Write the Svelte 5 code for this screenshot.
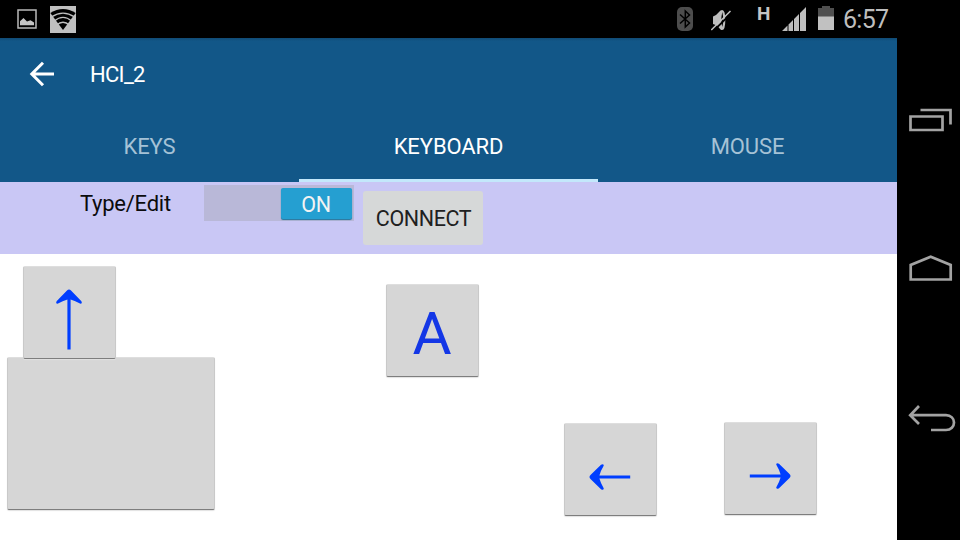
<script>
  const tabs = ['KEYS', 'KEYBOARD', 'MOUSE'];
  const selected = 'KEYBOARD';
  const keys = [
    { name: 'blank', x: 7, y: 103, w: 208, h: 153 },
    { name: 'up', x: 23, y: 12, w: 93, h: 93 },
    { name: 'A', x: 386, y: 30, w: 93, h: 93 },
    { name: 'left', x: 564, y: 169, w: 93, h: 93 },
    { name: 'right', x: 724, y: 168, w: 93, h: 93 }
  ];
</script>

<div class="screen">
  <header class="status">
    <svg class="picture" width="20" height="20" viewBox="0 0 20 20">
      <rect x="1" y="1" width="18" height="18" fill="none" stroke="#b9b9b9" stroke-width="1.5" />
      <path d="M3 16.3V12.2L6.5 9L10 12.4L13.5 11.2L17 13.5V16.3Z" fill="#c4c4c4" />
    </svg>
    <svg class="wifi" width="26" height="27" viewBox="0 0 26 27">
      <rect width="26" height="27" fill="#c0c0c0" />
      <path d="M.3 7Q13 -1 25.7 7L13 24Z" />
      <g fill="none" stroke="#c0c0c0" stroke-width="1.4">
        <path d="M1.5 10.8Q13 3.4 24.5 10.8" />
        <path d="M4.3 15Q13 7.8 21.7 15" />
        <path d="M6.5 19.3Q13 13.2 19.5 19.3" />
      </g>
    </svg>
    <span class="space"></span>
    <svg class="bluetooth" width="16" height="24" viewBox="0 0 16 24">
      <rect width="16" height="24" rx="5" fill="#4d4d4d" />
      <path d="M3 7.5L12.5 16L8.3 20V4L12.5 8L3 16.5" fill="none" stroke="#000" stroke-width="1.5" />
    </svg>
    <svg class="mute" width="20" height="24" viewBox="0 0 20 24">
      <path d="M2 8.5L5 7L9.5 2.5Q14.3 -.5 14.3 12T9.5 21.5L6 17.5L2 16Z" fill="#bdbdbd" />
      <path d="M11.3 4Q13.2 12 11.3 19Q9.3 12 11.3 4Z" fill="#000" />
      <path d="M2 23.5L21 4.5" stroke="#000" stroke-width="1.8" />
      <path d="M.3 22L19.5 3" stroke="#c4c4c4" stroke-width="1.5" />
    </svg>
    <span class="network">H</span>
    <svg class="signal" width="24" height="24" viewBox="0 0 24 24" fill="#bebebe">
      <path d="M0 24L5.5 18.5V24ZM6.5 17.5L11 13V24H6.5ZM12 12L17 7V24H12ZM18 6L24 0V24H18Z" />
    </svg>
    <svg class="battery" width="16" height="24" viewBox="0 0 16 24">
      <path d="M4 0H12V2H16V11H0V2H4Z" fill="#505050" />
      <path d="M0 10.5H16V24H0Z" fill="#c1c1c1" />
    </svg>
    <time>6:57</time>
  </header>
  <div class="body">
    <main>
      <div class="appbar">
        <svg width="26" height="26" viewBox="0 0 26 26" fill="none" stroke="#fff" stroke-width="3">
          <path d="M25 13H3M14 1.8L2.8 13L14 24.2" />
        </svg>
        <h1>HCI_2</h1>
      </div>
      <nav>
        {#each tabs as tab}
          <button class="tab" class:active={tab === selected}><span>{tab}</span></button>
        {/each}
      </nav>
      <section class="tools">
        <span class="label">Type/Edit</span>
        <button class="switch"><span>ON</span></button>
        <button class="connect">CONNECT</button>
      </section>
      <section class="board">
        {#each keys as key}
          <button
            class="key"
            style="left:{key.x}px;top:{key.y}px;width:{key.w}px;height:{key.h}px"
          >
            {#if key.name === 'A'}
              <span class="letter">A</span>
            {:else if key.name === 'up'}
              <svg class="up" width="28" height="62" viewBox="0 0 28 62">
                <path d="M14 .5Q15 .5 16 1.5L26.2 12Q27.7 14.4 25.5 14.8Q20 11.6 15.6 10.4V60.6H12.4V10.4Q8 11.6 2.5 14.8Q.3 14.4 1.8 12L12 1.5Q13 .5 14 .5Z" />
              </svg>
            {:else if key.name === 'left' || key.name === 'right'}
              <svg class={key.name} width="42" height="28" viewBox="0 0 42 28">
                <path d="M.5 14Q.5 13 1.5 12L12 1.8Q14.4 .3 14.8 2.5Q11.6 8 10.4 12.4H41.2V15.6H10.4Q11.6 20 14.8 25.5Q14.4 27.7 12 26.2L1.5 16Q.5 15 .5 14Z" />
              </svg>
            {/if}
          </button>
        {/each}
      </section>
    </main>
    <aside>
      <svg class="recent" width="48" height="28" viewBox="0 0 48 28">
        <path d="M2.5 8.5H34.5V22H2.5ZM12.5 2H42.5V16.5" />
      </svg>
      <svg class="home" width="48" height="28" viewBox="0 0 48 28">
        <path d="M2.7 24.5V10L22.7 1.8L42.7 10V24.5Z" />
      </svg>
      <svg class="back" width="48" height="28" viewBox="0 0 48 28">
        <path d="M11 1L2.2 10.2L11 19M3 10.2H38C43 10.2 46 13.5 46 17.5S43 25 38 25H23" />
      </svg>
    </aside>
  </div>
</div>

<style>
  .screen {
    width: 960px;
    height: 540px;
    overflow: hidden;
    background: #000;
    font-family: Roboto, sans-serif;
    display: flex;
    flex-direction: column;
  }
  svg { display: block; flex: none; }
  button { border: 0; padding: 0; margin: 0; font-family: inherit; }
  .status {
    height: 38px;
    flex: none;
    display: flex;
    align-items: center;
    box-sizing: border-box;
    padding: 0 71px 0 17px;
  }
  .wifi { margin-left: 13px; }
  .space { flex: 1; }
  .bluetooth { margin-right: 18px; }
  .mute { margin-right: 26px; margin-top: 1px; }
  .network {
    width: 14px;
    color: #c5c5c5;
    font: bold 19px/18px Roboto, sans-serif;
    margin: 0 11px 10px 0;
  }
  .signal { margin-right: 12px; }
  .battery { margin-right: 9px; margin-bottom: 2px; }
  time { width: 46px; color: #bebebe; font-size: 25px; letter-spacing: -0.7px; margin-top: 1px; }
  .body { flex: 1; display: flex; min-height: 0; }
  main { width: 897px; display: flex; flex-direction: column; background: #fff; }
  .appbar {
    height: 73px;
    flex: none;
    display: flex;
    align-items: center;
    background: linear-gradient(#104a74, #125788 3px);
    box-sizing: border-box;
    padding: 0 0 1px 29px;
  }
  h1 { margin: 1px 0 0 35px; color: #fff; font-size: 22px; font-weight: 400; letter-spacing: -0.7px; }
  nav { display: flex; height: 71px; flex: none; background: #125788; }
  .tab {
    flex: 1;
    background: none;
    color: #a5c2d6;
    font-size: 22px;
    letter-spacing: -0.1px;
    padding-top: 2px;
    border-bottom: 3px solid transparent;
  }
  .tab.active { color: #fff; border-color: #c3e8fb; }
  .tools {
    height: 72px;
    flex: none;
    display: flex;
    align-items: flex-start;
    background: #c9c7f5;
    box-sizing: border-box;
    padding-left: 80px;
  }
  .label { width: 124px; color: #0b0b0d; font-size: 22px; letter-spacing: -0.25px; line-height: 25px; margin-top: 9px; }
  .switch {
    width: 150px;
    height: 36px;
    margin-top: 3px;
    display: flex;
    justify-content: flex-end;
    align-items: center;
    background: #b9b8d8;
    box-sizing: border-box;
    padding-right: 2px;
  }
  .switch span {
    width: 71px;
    height: 31px;
    line-height: 33px;
    border-radius: 2px;
    background: #259fd1;
    box-shadow: 0 1px 1px #20759d;
    color: #f3f3f3;
    font-size: 21.5px;
    letter-spacing: -0.4px;
    text-indent: -1px;
  }
  .connect {
    width: 120px;
    height: 54px;
    margin: 9px 0 0 9px;
    padding: 0 0 0 1px;
    border-radius: 3px;
    background: #d6d8d8;
    color: #202020;
    font-size: 21.5px;
    letter-spacing: -0.4px;
  }
  .board { position: relative; flex: 1; }
  .key {
    position: absolute;
    display: flex;
    align-items: center;
    justify-content: center;
    background: #d6d6d6;
    border: 1px solid #c9c9c9;
    border-top-color: #dedede;
    border-bottom-color: #7e7e7e;
    border-radius: 2px;
    box-shadow: 0 1px 1px #e2e2e2;
  }
  .key svg { fill: #003eff; }
  .up { margin: 15px 0 0 -1px; }
  .left, .right { margin: 15px 1px 0 0; }
  .right { transform: scaleX(-1); }
  .letter { color: #1437e6; font-size: 60px; line-height: 60px; margin: 7px 1px 0 0; }
  aside { width: 63px; display: flex; flex-direction: column; align-items: flex-end; padding-right: 4px; box-sizing: border-box; }
  aside svg { fill: none; stroke: #a3a3a3; stroke-width: 2.7; }
  .recent { margin-top: 70px; }
  .home { margin-top: 119px; }
  .back { margin-top: 122px; }
</style>
